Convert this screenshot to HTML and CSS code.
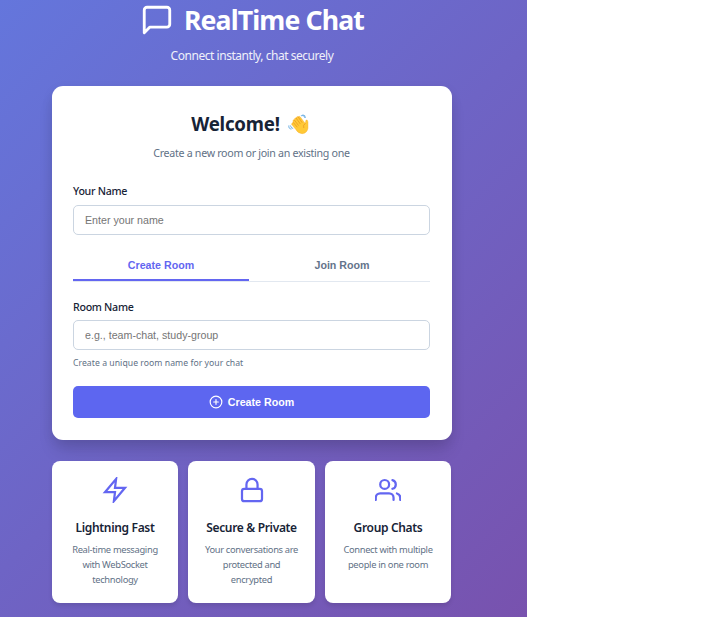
FILE: index.html
```html
<!DOCTYPE html>
<html lang="en">
<head>
<meta charset="utf-8">
<title>RealTime Chat</title>
<link rel="stylesheet" href="styles.css">
</head>
<body>
<div class="page">
  <main class="container">
    <header class="header">
      <div class="brand">
        <svg class="brand-icon" viewBox="0 0 24 24"><path d="M21 15a2 2 0 0 1-2 2H7l-4 4V5a2 2 0 0 1 2-2h14a2 2 0 0 1 2 2z"/></svg>
        <h1>RealTime Chat</h1>
      </div>
      <p class="tagline">Connect instantly, chat securely</p>
    </header>
    <section class="card">
      <div class="welcome">
        <h2>Welcome!</h2>
        <svg class="wave" viewBox="0 0 20 20">
          <path class="hand" d="M3.8 10.2 7.3 14.6Q9.5 18.7 13.5 18.7Q18.4 18.1 19 13.5V7.5Q18.7 5.2 17.2 5.7L16.4 9 11.7 2.8Q10.5 1.5 9.7 2.7Q8 2.2 7.8 3.8Q6 3.6 6.1 5.4Q4.1 5.5 4.8 7.3L5.2 8Q3 8 3.8 10.2Z"/>
          <path class="crease" d="M9.7 2.8 13.3 8M7.8 4 11.6 9.3M6.1 5.8 9.8 10.7M5.1 8.1 8.6 12.3M16.4 9Q13.9 10.4 14.9 13"/>
          <path class="motion" d="M12.6 1.5Q15 .3 16.1 3.3M14.2.8Q16.8.8 16.5 3.4M.8 11.2Q.2 14.2 3 14.3M2.4 11.3Q2.2 13.1 4.6 13.8"/>
        </svg>
      </div>
      <p class="subtitle">Create a new room or join an existing one</p>
      <label class="label" for="name">Your Name</label>
      <input id="name" class="input" type="text" placeholder="Enter your name">
      <div class="tabs">
        <button class="tab active">Create Room</button>
        <button class="tab">Join Room</button>
      </div>
      <label class="label" for="room">Room Name</label>
      <input id="room" class="input" type="text" placeholder="e.g., team-chat, study-group">
      <p class="hint">Create a unique room name for your chat</p>
      <button class="submit">
        <svg viewBox="0 0 24 24"><circle cx="12" cy="12" r="10"/><path d="M12 8v8M8 12h8"/></svg>
        <span>Create Room</span>
      </button>
    </section>
    <section class="features">
      <article class="feature">
        <svg viewBox="0 0 24 24"><path class="sharp" d="M13 2 3 14h9l-1 8 10-12h-9l1-8z"/></svg>
        <h3>Lightning Fast</h3>
        <p>Real-time messaging<br>with WebSocket<br>technology</p>
      </article>
      <article class="feature">
        <svg viewBox="0 0 24 24"><rect x="3" y="11" width="18" height="11" rx="2"/><path d="M7 11V7a5 5 0 0 1 10 0v4"/></svg>
        <h3>Secure &amp; Private</h3>
        <p>Your conversations are<br>protected and<br>encrypted</p>
      </article>
      <article class="feature">
        <svg viewBox="0 0 24 24"><path d="M17 21v-2a4 4 0 0 0-4-4H5a4 4 0 0 0-4 4v2"/><circle cx="9" cy="7" r="4"/><path d="M23 21v-2a4 4 0 0 0-3-3.87M16 3.13a4 4 0 0 1 0 7.75"/></svg>
        <h3>Group Chats</h3>
        <p>Connect with multiple<br>people in one room</p>
      </article>
    </section>
  </main>
</div>
</body>
</html>
```
FILE: styles.css
```css
* { box-sizing: border-box; margin: 0; padding: 0; }
body { background: #fff; font-family: "Noto Sans", "Open Sans", sans-serif; color: #172336; overflow: hidden; }
svg { fill: none; stroke: currentColor; stroke-width: 2; stroke-linecap: round; stroke-linejoin: round; flex: none; }
.page { width: 527px; height: 617px; background: linear-gradient(135deg, #6476dc 0%, #7852ae 100%); overflow: hidden; }
.container { width: 400px; margin-left: 52px; }
.header { height: 86px; color: #fff; text-align: center; }
.brand { display: flex; justify-content: center; align-items: center; gap: 10px; height: 40px; }
.brand-icon { width: 34px; height: 34px; }
h1 { font-size: 26.67px; line-height: 38px; font-weight: 700; letter-spacing: -.88px; white-space: nowrap; }
.tagline { margin-top: 7px; font-size: 12px; line-height: 18px; letter-spacing: -.46px; opacity: .9; }
.card { height: 354px; padding: 23px 22px 22px 21px; background: #fff; border-radius: 11px; box-shadow: 0 13px 17px -3px rgba(0,0,0,.12), 0 4px 12px rgba(0,0,0,.08); }
.welcome { display: flex; justify-content: center; align-items: center; gap: 8px; height: 29px; padding-right: 3px; }
h2 { font-size: 18.67px; line-height: 29px; letter-spacing: -.2px; }
.wave { width: 21px; height: 21px; margin-top: 2px; }
.hand { fill: #ffc936; stroke: #f7ad27; stroke-width: .4; }
.crease { stroke: #e99520; stroke-width: .7; }
.motion { stroke: #5aa4df; stroke-width: .8; }
.subtitle { margin-top: 6px; text-align: center; font-size: 10.67px; line-height: 18px; letter-spacing: -.3px; color: #5f7186; }
.label { display: block; height: 17px; margin-top: 21px; font-size: 10.67px; line-height: 17px; font-weight: 500; letter-spacing: -.3px; }
.input { display: block; width: 100%; height: 30px; margin-top: 5px; padding: 0 11px; border: 1px solid #cbd5e1; border-radius: 5px; background: #fff; font: 10.67px "Liberation Sans", sans-serif; }
.input::placeholder { color: #757575; opacity: 1; }
.tabs { display: flex; gap: 5px; height: 31px; margin-top: 16px; border-bottom: 1px solid #e2e8f0; }
.tab { flex: 1; height: 30px; border: 0; border-bottom: 2px solid transparent; background: none; font: 700 10.67px "Liberation Sans", sans-serif; color: #64748b; }
.tab.active { border-color: #6366f1; color: #6366f1; }
.tabs + .label { margin-top: 17px; }
.tabs + .label + .input { margin-top: 4px; }
.hint { margin-top: 5px; height: 16px; font-size: 8.67px; line-height: 16px; letter-spacing: .04px; color: #5f7186; }
.submit { display: flex; width: 100%; height: 32px; margin-top: 15px; align-items: center; justify-content: center; gap: 5px; border: 0; border-radius: 5px; background: #5d66f0; color: #fff; font: 700 10.67px "Liberation Sans", sans-serif; }
.submit svg { width: 14px; height: 14px; }
.features { display: grid; grid-template-columns: 126px 127px 126px; gap: 10px; margin-top: 21px; }
.feature { height: 142px; padding-top: 13px; background: #fff; border-radius: 8px; text-align: center; box-shadow: 0 3px 4px rgba(0,0,0,.1); }
.feature svg { display: block; width: 32px; height: 32px; margin: 0 auto; padding: 2.67px; color: #6366f1; }
.sharp { stroke-linejoin: miter; }
.feature h3 { margin-top: 12px; font-size: 12px; line-height: 19px; font-weight: 600; letter-spacing: -.33px; white-space: nowrap; }
.feature p { margin-top: 5px; font-size: 9.33px; line-height: 15px; letter-spacing: -.32px; color: #5f7186; white-space: nowrap; }
```
